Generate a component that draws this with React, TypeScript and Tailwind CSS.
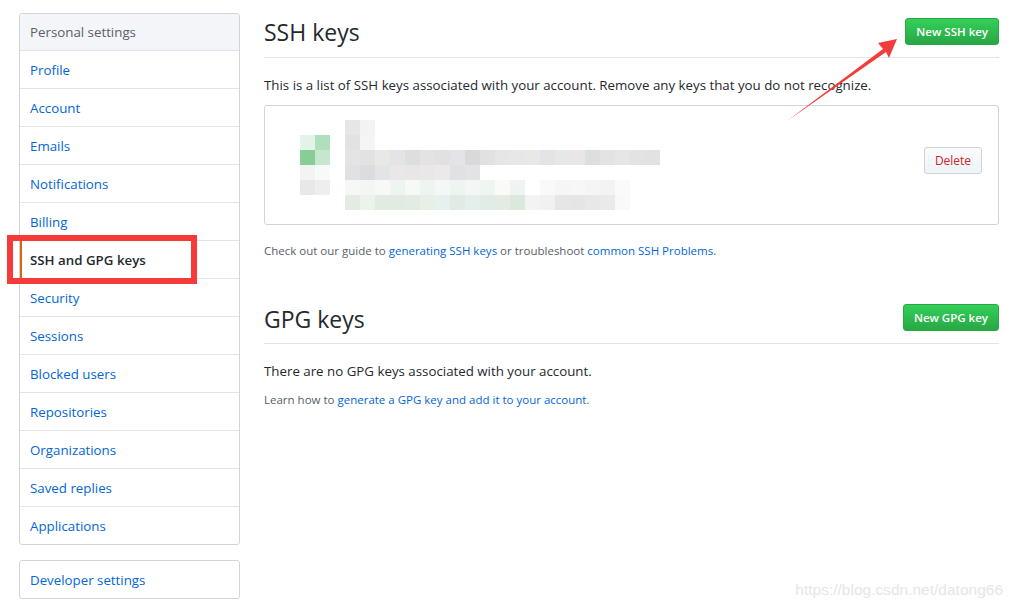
import React from "react";

const items = [
  "Profile",
  "Account",
  "Emails",
  "Notifications",
  "Billing",
  "SSH and GPG keys",
  "Security",
  "Sessions",
  "Blocked users",
  "Repositories",
  "Organizations",
  "Saved replies",
  "Applications",
];

const iconRows: string[][] = [
  ["bg-[#e3f3e7]", "bg-[#b0dfbb]"],
  ["bg-[#88cd98]", "bg-[#c5e7cd]"],
  ["bg-[#f2f3f3]", "bg-[#f9f9f9]"],
  ["bg-[#e8e8e8]", "bg-[#eeeeee]"],
];

const keyRows: string[][] = [
  ["bg-[#e6e6e6]", "bg-[#f3f3f3]"],
  ["bg-[#e2e2e2]", "bg-[#f5f5f5]"],
  [
    "bg-[#e3e4e6]", "bg-[#e2e2e2]", "bg-[#e8e8e6]", "bg-[#e3e4e6]", "bg-[#dedede]", "bg-[#e4e2e2]", "bg-[#e2e1e1]",
    "bg-[#e3e4e8]", "bg-[#d9d9db]", "bg-[#e2e0e0]", "bg-[#e5e6e6]", "bg-[#e6e7e7]", "bg-[#e8e8e6]", "bg-[#e3e4e6]",
    "bg-[#e6e7e9]", "bg-[#e8e6e6]", "bg-[#dddee0]", "bg-[#e2e3e5]", "bg-[#e6e6e8]", "bg-[#e3e3e5]", "bg-[#e2e2e2]",
  ],
  ["bg-[#e1e1e1]", "bg-[#dcdcde]", "bg-[#e3e4e6]", "bg-[#e9e7e7]", "bg-[#e8e6e6]", "bg-[#e9e7e7]", "bg-[#ece9e9]", "bg-[#e1e1e3]", "bg-[#e3e3e5]"],
  [
    "bg-[#f6f8f6]", "bg-[#f4f6f4]", "bg-[#f7f9f7]", "bg-[#eef4ef]", "bg-[#f7f9f7]", "bg-[#eef4f0]", "bg-[#f4f7f5]",
    "bg-[#eef4f0]", "bg-[#f3f6f4]", "bg-[#eff5f0]", "bg-[#fafaf7]", "bg-[#eff4f3]", "bg-[#ffffff]", "bg-[#f9f9f9]",
    "bg-[#f6f6f6]", "bg-[#f7f7f7]", "bg-[#f5f5f5]", "bg-[#f3f3f3]", "bg-[#fafafa]",
  ],
  [
    "bg-[#e3ebe3]", "bg-[#ecf2ec]", "bg-[#e1ebe2]", "bg-[#e1ebe2]", "bg-[#e3ebe5]", "bg-[#e7efe7]", "bg-[#e6f0ee]",
    "bg-[#e1ebe3]", "bg-[#e4eeea]", "bg-[#e2ece6]", "bg-[#e3ebe3]", "bg-[#dbe8de]", "bg-[#f3f3f3]", "bg-[#f1f1f1]",
    "bg-[#e6e6e6]", "bg-[#e5e5e5]", "bg-[#e8e8ea]", "bg-[#eaeaea]", "bg-[#f8f9fb]",
  ],
];

function GreenButton({ label }: { label: string }) {
  return (
    <button className="h-[27px] px-[10px] rounded-[3px] border border-[#28a745] bg-gradient-to-b from-[#34d058] to-[#28a745] text-white text-[11.5px] font-semibold leading-[25px]">
      {label}
    </button>
  );
}

export default function App() {
  return (
    <div
      className="relative w-[1015px] h-[607px] bg-white overflow-hidden text-[#24292e]"
      style={{ fontFamily: '"Open Sans", "Noto Sans", sans-serif' }}
    >
      <div className="flex gap-[24px] pl-[19px] pt-[13px]">
        {/* Sidebar */}
        <div className="w-[221px] shrink-0">
          <div className="border border-[#d1d5da] rounded-[3px] overflow-hidden">
            <div className="h-[36px] px-[10px] pt-[2px] flex items-center bg-[#f3f5f8] text-[13.3px] text-[#586069]">
              Personal settings
            </div>
            {items.map((it) => {
              const active = it === "SSH and GPG keys";
              return (
                <div
                  key={it}
                  className={
                    active
                      ? "relative h-[38px] border-t border-[#e1e4e8] px-[10px] pt-[2px] flex items-center text-[13.3px] font-semibold text-[#24292e]"
                      : "h-[38px] border-t border-[#e1e4e8] px-[10px] pt-[2px] flex items-center text-[13.3px] text-[#0366d6]"
                  }
                >
                  {active && <span className="absolute left-0 top-0 bottom-0 w-[2px] bg-[#e36209]" />}
                  {it}
                </div>
              );
            })}
          </div>
          <div className="mt-[15px] border border-[#d1d5da] rounded-[3px] h-[39px] px-[10px] pt-[3px] flex items-center text-[13.3px] text-[#0366d6]">
            Developer settings
          </div>
        </div>

        {/* Main */}
        <div className="w-[735px]">
          <div className="flex items-center justify-between border-b border-[#e1e4e8] pb-[8px] h-[45px]">
            <h2 className="text-[23px] leading-[36px] font-normal pt-[2px]">SSH keys</h2>
            <GreenButton label="New SSH key" />
          </div>
          <p className="mt-[17px] text-[13.3px] leading-[21px]">
            This is a list of SSH keys associated with your account. Remove any keys that you do not recognize.
          </p>
          <div className="mt-[9px] border border-[#d1d5da] rounded-[3px] flex items-start pl-[35px] pr-[16px] pb-[14px]">
            <div className="mt-[29px] flex flex-col blur-[0.6px]">
              {iconRows.map((r, i) => (
                <div key={i} className="flex">
                  {r.map((c, j) => (
                    <div key={j} className={"w-[15px] h-[15px] " + c} />
                  ))}
                </div>
              ))}
            </div>
            <div className="mt-[14px] ml-[15px] flex flex-col blur-[0.6px]">
              {keyRows.map((r, i) => (
                <div key={i} className="flex">
                  {r.map((c, j) => (
                    <div key={j} className={"w-[15px] h-[15px] " + c} />
                  ))}
                </div>
              ))}
            </div>
            <div className="flex-1" />
            <button className="mt-[41px] h-[27px] w-[58px] rounded-[3px] border border-[#cfd3d8] bg-gradient-to-b from-[#fafbfc] to-[#eff3f6] text-[#cb2431] text-[12px] leading-[25px]">
              Delete
            </button>
          </div>
          <p className="mt-[17px] text-[11.5px] leading-[18px] text-[#586069]">
            Check out our guide to <span className="text-[#0366d6]">generating SSH keys</span> or troubleshoot{" "}
            <span className="text-[#0366d6]">common SSH Problems</span>.
          </p>

          <div className="mt-[39px] flex items-center justify-between border-b border-[#e1e4e8] pb-[8px] h-[45px]">
            <h2 className="text-[23px] leading-[36px] font-normal pt-[3px]">GPG keys</h2>
            <GreenButton label="New GPG key" />
          </div>
          <p className="mt-[17px] text-[13.3px] leading-[21px]">There are no GPG keys associated with your account.</p>
          <p className="mt-[9px] text-[11.5px] leading-[18px] text-[#586069]">
            Learn how to <span className="text-[#0366d6]">generate a GPG key and add it to your account</span>.
          </p>
        </div>
      </div>

      {/* Annotation rectangle */}
      <div className="absolute left-[7px] top-[235px] w-[190px] h-[49px] border-[6px] border-[#f53a3a] pointer-events-none" />

      {/* Annotation arrow */}
      <svg className="absolute left-0 top-0 pointer-events-none" width="1015" height="607">
        <polygon points="897,39 878,43 883,49 787,121 886,52 889,58" fill="#f33d3d" />
      </svg>

      {/* Watermark */}
      <div
        className="absolute right-[12px] bottom-[6px] text-[15.5px] text-[#e6e6e6]"
        style={{ fontFamily: '"Liberation Sans", Arial, sans-serif' }}
      >
        https://blog.csdn.net/datong66
      </div>
    </div>
  );
}
